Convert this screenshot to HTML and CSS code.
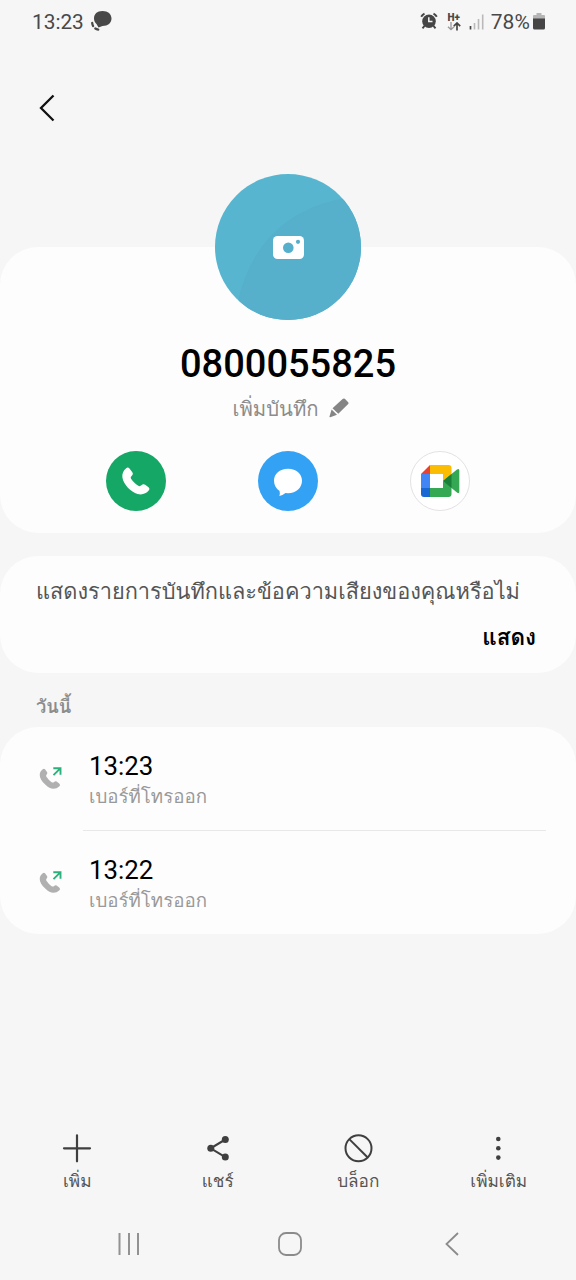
FILE: index.html
```html
<!DOCTYPE html>
<html lang="th">
<head>
<meta charset="utf-8">
<title>0800055825</title>
<link rel="stylesheet" href="styles.css">
</head>
<body>
<div class="phone">
  <header class="status">
    <span class="status-time">13:23</span>
    <svg class="status-chat" width="22" height="22" viewBox="0 0 22 22"><path d="M12.500 0C18 0 21.500 3 21.500 7.500S18 15 12.500 15L8.500 16.500 6.500 13C4.800 11.500 4 9.500 4 7.500 4 3 7 0 12.500 0Z" fill="#484848"/><path d="M2.200 12Q2.800 17.500 8.500 18.600" fill="none" stroke="#484848" stroke-width="2.300" stroke-linecap="round" stroke-dasharray="3 3.500"/></svg>
    <span class="spacer"></span>
    <svg class="status-alarm" width="18" height="18" viewBox="0 0 18 18"><circle cx="9" cy="9.300" r="6.800" fill="#454545"/><path d="M1.200 4.800A8 8 0 0 1 4.500 1.600M16.800 4.800A8 8 0 0 0 13.500 1.600M4.500 13.800 2.500 16.300M13.500 13.800 15.500 16.300" stroke="#454545" stroke-width="1.900" fill="none"/><path d="M8.800 5.300V9.600H12.500" stroke="#f6f6f6" stroke-width="1.500" fill="none"/></svg>
    <span class="status-data"><b>H+</b><svg width="14" height="9" viewBox="0 0 14 9"><path d="M4 0V7.500M1 4.700 4 7.700 7 4.700" stroke="#999" fill="none" stroke-width="1.300"/><path d="M10 8.500V1M6.800 4.200 10 1 13.200 4.200" stroke="#454545" fill="none" stroke-width="1.700"/></svg></span>
    <svg class="status-signal" width="16" height="16" viewBox="0 0 16 16"><path d="M1.500 12V15.500" stroke="#454545" stroke-width="1.700"/><path d="M5.500 9V15.500M9.500 5V15.500M13.700 .5V15.500" stroke="#b9b9b9" stroke-width="1.600"/></svg>
    <span class="status-percent">78%</span>
    <svg class="status-battery" width="12" height="17" viewBox="0 0 12 17"><path d="M3.500 0h5v2H11q1 0 1 1V6H0V3q0-1 1-1h2.500Z" fill="#b5b5b5"/><path d="M0 5.500H12V15q0 1.500-1.500 1.500h-9Q0 16.500 0 15Z" fill="#454545"/></svg>
  </header>

  <nav class="topbar">
    <svg width="18" height="30" viewBox="0 0 18 30"><path d="M15.500 2.500 3 15 15.500 27.500" fill="none" stroke="#111" stroke-width="2.300"/></svg>
  </nav>

  <main>
    <section class="card profile">
      <svg class="avatar" width="146" height="146" viewBox="0 0 146 146">
        <defs><clipPath id="disc"><circle cx="73" cy="73" r="73"/></clipPath></defs>
        <circle cx="73" cy="73" r="73" fill="#57b5cf"/>
        <path d="M22 132Q40 45 121 26L150 20V150H22Z" fill="#56afcb" clip-path="url(#disc)"/>
        <rect x="58" y="62" width="31" height="23" rx="4.500" fill="#fff"/>
        <circle cx="73.300" cy="73.700" r="5.300" fill="#56afcb"/><circle cx="83" cy="67.800" r="2.100" fill="#56afcb"/>
      </svg>
      <h1 class="number">0800055825</h1>
      <div class="note"><span class="note-text">เพิ่มบันทึก</span>
        <svg class="pencil" width="20" height="20" viewBox="0 0 20 20"><path d="M13.600 .9Q14.700 0 15.800 .8L19.200 4.200Q20 5.200 19.200 6.100L9.300 15.800 3.500 10.200Z M2.600 11.400 8 16.800 1.200 19.300Q.2 19.500 .5 18.500Z" fill="#858585"/></svg>
      </div>
      <div class="actions">
        <svg width="60" height="60" viewBox="0 0 60 60"><circle cx="30" cy="30" r="30" fill="#15a765"/><path d="M20.200 17.200C21.300 16.200 22.700 16.500 23.500 17.600L26.300 21.200C27.200 22.500 27 23.500 26 24.600L25 25.800C24.400 26.700 24.800 27.600 25.600 28.600 27.300 30.900 29.500 33 31.900 34.600 32.900 35.200 33.800 35.500 34.600 34.800L36.200 33.700C37.200 33 38.200 33.100 39.200 33.800L42.500 36.300C43.600 37.200 43.700 38.500 42.700 39.600 40 42.800 36 44.300 31.500 43 25 41 17.500 33.500 16.400 26.500 15.800 22.500 17.500 19.300 20.200 17.200Z" fill="#fff"/></svg>
        <svg width="60" height="60" viewBox="0 0 60 60"><circle cx="30" cy="30" r="30" fill="#33a2f4"/><path d="M30 17.800C38.500 17.800 44 23 44 29.800S38.500 42.200 30 42.200L27.500 42.100Q24.500 44.600 21.300 45 22.200 42.700 21.600 40C18 37.500 16 34 16 29.800 16 23 21.500 17.800 30 17.800Z" fill="#fff"/></svg>
        <svg width="60" height="60" viewBox="0 0 60 60"><circle cx="30" cy="30" r="29.500" fill="#fff" stroke="#e2e2e4"/><path d="M20 14H38.500Q41.500 14 41.500 17V24L33 30V23H20Z" fill="#fbbc04"/><path d="M20 14V23H11Z" fill="#e94235"/><path d="M11 23H20V37H11Z" fill="#4285f4"/><path d="M11 37H20V46H14Q11 46 11 43Z" fill="#1967d2"/><path d="M20 37H33V30L41.500 36V43Q41.500 46 38.500 46H20Z" fill="#34a853"/><path d="M33 30 47 18.600Q49.300 17 49.300 19.500V40.500Q49.300 43 47 41.400Z" fill="#34a853"/><path d="M33 30 41.500 23V37Z" fill="#188038"/></svg>
      </div>
    </section>

    <section class="card prompt">
      <p class="prompt-text">แสดงรายการบันทึกและข้อความเสียงของคุณหรือไม่</p>
      <div class="prompt-action">แสดง</div>
    </section>

    <h2 class="day">วันนี้</h2>
    <section class="card calls">
      <article class="call">
        <svg class="call-icon" width="24" height="24" viewBox="0 0 24 24"><path d="M3.800 3.300Q5 2.300 6.200 3.600L8 6Q8.700 7.200 7.700 8.400 6.600 9.500 7.600 11 9.500 14 12.600 16.200 13.900 17 14.900 16.200 16.300 14.700 17.600 15.500L20.200 17.500Q21.600 18.700 20.400 20.200C16.500 24 11 23.500 6.500 18.800 -.2 12.500 -1 7 3.800 3.300Z" fill="#b0b0b0"/><path d="M14.500 9.200 21.300 2.400M14.300 2.200H21.500V8.800" fill="none" stroke="#2bb17c" stroke-width="1.900"/></svg>
        <div class="call-body"><div class="call-time">13:23</div><div class="call-kind">เบอร์ที่โทรออก</div></div>
      </article>
      <article class="call">
        <svg class="call-icon" width="24" height="24" viewBox="0 0 24 24"><path d="M3.800 3.300Q5 2.300 6.200 3.600L8 6Q8.700 7.200 7.700 8.400 6.600 9.500 7.600 11 9.500 14 12.600 16.200 13.900 17 14.900 16.200 16.300 14.700 17.600 15.500L20.200 17.500Q21.600 18.700 20.400 20.200C16.500 24 11 23.500 6.500 18.800 -.2 12.500 -1 7 3.800 3.300Z" fill="#b0b0b0"/><path d="M14.500 9.200 21.300 2.400M14.300 2.200H21.500V8.800" fill="none" stroke="#2bb17c" stroke-width="1.900"/></svg>
        <div class="call-body"><div class="call-time">13:22</div><div class="call-kind">เบอร์ที่โทรออก</div></div>
      </article>
    </section>
  </main>

  <footer class="toolbar">
    <div class="tool"><svg width="30" height="30" viewBox="0 0 30 30"><path d="M15 2.300V28.300M2 15.300H28" stroke="#3f3f3f" stroke-width="2.200" stroke-linecap="round"/></svg><span>เพิ่ม</span></div>
    <div class="tool"><svg width="30" height="30" viewBox="0 0 30 30"><path d="M22.300 6.500 7.700 15.300 22.300 24.100" fill="none" stroke="#3f3f3f" stroke-width="2.100"/><g fill="#3f3f3f"><circle cx="22.300" cy="6.600" r="3.500"/><circle cx="7.800" cy="15.300" r="3.500"/><circle cx="22.300" cy="24" r="3.500"/></g></svg><span>แชร์</span></div>
    <div class="tool"><svg width="30" height="30" viewBox="0 0 30 30"><g fill="none" stroke="#3f3f3f" stroke-width="2"><circle cx="15.500" cy="15.300" r="13"/><path d="M6.300 6.100 24.700 24.500"/></g></svg><span>บล็อก</span></div>
    <div class="tool"><svg width="30" height="30" viewBox="0 0 30 30"><g fill="#3f3f3f"><circle cx="14.300" cy="6" r="2.300"/><circle cx="14.300" cy="15.300" r="2.300"/><circle cx="14.300" cy="24.600" r="2.300"/></g></svg><span>เพิ่มเติม</span></div>
  </footer>

  <div class="sysnav">
    <svg width="24" height="24" viewBox="0 0 24 24"><path d="M2.500 1V23M12 1V23M21 1V23" stroke="#929292" stroke-width="2"/></svg>
    <svg width="24" height="24" viewBox="0 0 24 24"><rect x="1" y="1" width="22" height="22" rx="7" fill="none" stroke="#8b8b8b" stroke-width="1.800"/></svg>
    <svg width="24" height="24" viewBox="0 0 24 24"><path d="M19 1 7.500 12 19 23" fill="none" stroke="#8b8b8b" stroke-width="1.800"/></svg>
  </div>
</div>
</body>
</html>
```
FILE: styles.css
```css
* { box-sizing: border-box; margin: 0; padding: 0; }
body { background: #f6f6f6; font-family: Roboto, Loma, "Noto Sans Thai", "Noto Sans", sans-serif; color: #000; }
svg { display: block; flex: none; }
.phone { width: 576px; height: 1280px; display: flex; flex-direction: column; overflow: hidden; background: #f6f6f6; }

.status { height: 44px; padding: 0 31px 0 32px; display: flex; align-items: center; color: #484848; }
.status-time { font-size: 20.8px; line-height: 42px; margin-top: -1px; }
.status-chat { margin: 0 0 0 6px; }
.spacer { flex: 1; }
.status-alarm { margin-top: -2px; }
.status-data { display: flex; flex-direction: column; align-items: center; width: 14px; margin: -1px 8px 0 9px; font: 700 10px/9px Roboto, sans-serif; }
.status-percent { font-size: 21px; margin-left: 6px; letter-spacing: .1px; }
.status-battery { margin: -1px 0 0 3px; }

.topbar { height: 203px; padding: 49px 0 0 38px; }

.card { background: #fdfdfd; border-radius: 38px; }
.profile { height: 286px; display: flex; flex-direction: column; align-items: center; }
.avatar { margin-top: -73px; }
.number { margin-top: 20px; height: 48px; font-size: 38px; line-height: 48px; font-weight: 500; }
.note { display: flex; align-items: center; height: 36px; margin-top: 2px; padding-left: 5px; color: #8c8c8c; font-family: Loma, "Noto Sans Thai", sans-serif; font-size: 20.3px; gap: 10px; }
.note-text { padding-top: 2px; }
.actions { display: flex; justify-content: space-between; width: 364px; margin-top: 25px; }

.prompt { height: 117px; margin-top: 23px; padding: 17px 40px 0 36px; font-family: Loma, "Noto Sans Thai", sans-serif; }
.prompt-text { font-size: 21.75px; line-height: 38px; color: #555; white-space: nowrap; }
.prompt-action { margin-top: 7px; font-size: 22.500px; line-height: 38px; font-weight: 700; text-align: right; }

.day { height: 54px; padding: 16px 36px 0; font-family: Loma, "Noto Sans Thai", sans-serif; font-size: 18.300px; line-height: 36px; font-weight: 700; color: #8c8c8c; }

.call { height: 104px; display: flex; padding: 0 30px 0 39px; }
.call + .call { height: 103px; }
.call-icon { margin: 39px 20px 0 0; }
.call-body { flex: 1; padding: 22px 0 0 6px; }
.call + .call .call-body { border-top: 1px solid #e8e8e8; padding-top: 22px; margin-top: -1px; }
.call-time { font-size: 25.8px; line-height: 34px; }
.call-kind { font-family: Loma, "Noto Sans Thai", sans-serif; font-size: 18.7px; line-height: 27px; color: #999; }

.toolbar { margin-top: auto; height: 100px; display: flex; padding: 0 7px; }
.tool { flex: 1; display: flex; flex-direction: column; align-items: center; padding-top: 24px; }
.tool span { font-family: Loma, "Noto Sans Thai", sans-serif; font-size: 17.2px; line-height: 30px; margin-top: 3px; color: #555; white-space: nowrap; }
.sysnav { height: 71px; display: flex; justify-content: space-between; align-items: center; padding: 0 113px 1px 117px; }
```
